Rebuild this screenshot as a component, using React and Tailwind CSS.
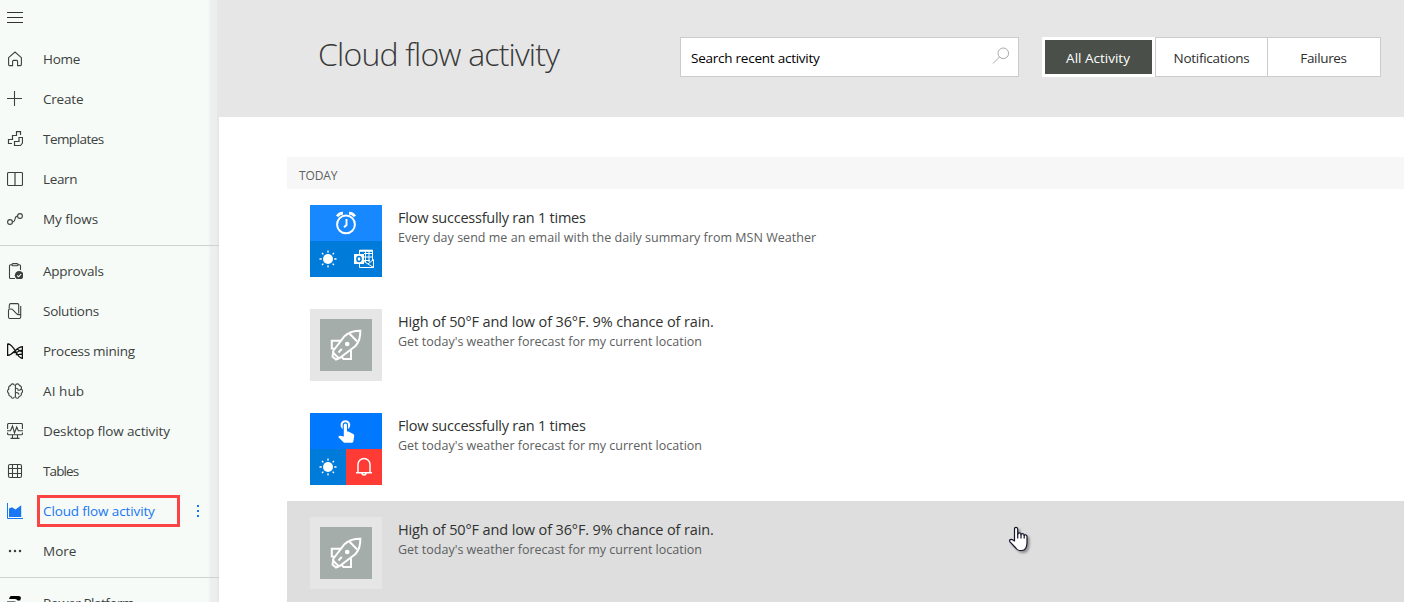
const icons = {
  home: <path d="M1.6 6.7 8 1l6.4 5.7V13.6a1 1 0 0 1-1 1H10.600V10.400a1 1 0 0 0-1-1H6.600a1 1 0 0 0-1 1V14.600H2.600a1 1 0 0 1-1-1Z" />,
  create: <path d="M0 7.500H15M7.500 0V15" />,
  templates: <path d="M13.500 4V.6H9.500V4.500H5.500V8.500H1.500V12.500H5M12 6.500h3.500V12l-2 2.500H7.500V10.500H12Z" strokeWidth="1.200" />,
  learn: <><rect x=".5" y="1.500" width="15" height="13" rx="1" strokeWidth="1.150" /><path d="M7.500 2V14M8.500 2V14" strokeWidth=".6" /></>,
  flows: <><circle cx="3" cy="11" r="2.400" /><circle cx="13" cy="5" r="2.400" /><path d="M5.400 11C9.500 11 6.500 5 10.600 5" /></>,
  approvals: <><path d="M5 1.800H3.500a1 1 0 0 0-1 1V14.500a1 1 0 0 0 1 1H8M11 1.800h1.500a1 1 0 0 1 1 1V7" /><rect x="5" y=".6" width="6" height="2.200" rx="1" /><circle cx="12.200" cy="12.300" r="4.400" fill="currentColor" stroke="none" /><path d="m10.200 12.500 1.400 1.300 2.500-2.700" stroke="#f6fbf8" /></>,
  solutions: <path d="M2.100 5.500 2.400 1.800q.1-1.200 1.200-1.200H10.500q1.200 0 1.200 1.200V10.500M13.700 3V14q0 1.500-1.500 1.500H3q-1.500 0-1.500-1.500V7.500q0-1.500 1.500-1.500h1q1.100 0 1.900 1l3.600 3.600q.9 1 2 1h2.200" />,
  mining: <path d="M.6.700V12.400C7.500 12 7.500 4.500 15.400 3.600V15.400C9 15 8.500 2 .6.700M7 9.500C10 10.500 12 7.200 15.400 7.200M8.800 11.500C11 12 13 11 15.400 11M10 6 15.400 9.200" stroke="#111" strokeWidth="1.300" />,
  ai: <><path d="M7.400 2.500C7 .3 4.200.2 3.600 2.600 1.600 3 1.300 4.800 1.900 6 0 7 .2 9.600 1.800 10.300c-.4 1.800.7 3 2.100 3 .6 2.600 3.200 2.600 3.500.4" /><path d="M8.400 2.500C8.800.3 11.900.2 12.500 2.600c2 .4 2.200 2.200 1.700 3.400 1.800 1 1.700 3.600.1 4.300.4 1.800-.7 3-2.100 3-.6 2.600-3.200 2.600-3.800.4ZM9 5.200c1.300 0 2 .7 2.200 1.500M14 6.200c-1 1.200-2.500 1.200-3.500.8M9 9.500c1.500 0 2.700.8 3 2" /></>,
  desktop: <><path d="M.6 6V1.500a1 1 0 0 1 1-1H14.400a1 1 0 0 1 1 1V6M.6 9.500v1.200a1 1 0 0 0 1 1H14.400a1 1 0 0 0 1-1V9.500M5.500 12v3M10.500 12v3M3.500 15.400h9" /><path d="M0 7.800H3.500L5.500 3 7.500 10 9.700 4l1.600 3.800H16" strokeWidth="1.100" /></>,
  tables: <><rect x="1.500" y="1.500" width="13" height="13" rx="1.500" /><path d="M1.500 5.500h13M1.500 10.500h13M5.500 1.500v13M10.500 1.500v13" /></>,
  chart: <><path d="M.5 0V15.500H16" /><path d="M2 14V5.500L5 4.200 8.500 6.500 14.200 2.200V14Z" fill="currentColor" stroke="none" /></>,
  more: <g fill="currentColor" stroke="none"><circle cx="3" cy="8" r="1.250" /><circle cx="8" cy="8" r="1.250" /><circle cx="13" cy="8" r="1.250" /></g>,
  platform: <path d="M4.500 1H11.500Q14.500 1 13.800 3.500L13.200 5.500H10.500Q10 4 8 4H2L2.800 2Q3.200 1 4.500 1ZM0 6.500H8.500L8 8.500H.5ZM1 10H12L10 13H2Z" fill="black" stroke="none" />,
};

function NavItem({ icon, label, spacing }) {
  return (
    <a className="flex h-10 shrink-0 items-center gap-5 pl-[7px] text-[#3c413d]">
      <svg className="size-4 shrink-0" viewBox="0 0 16 16" fill="none" stroke="currentColor" strokeWidth="1.100">{icons[icon]}</svg>
      <span className={`whitespace-nowrap text-[13.5px] ${spacing}`}>{label}</span>
    </a>
  );
}

function Sun() {
  return (
    <svg className="size-[18px]" viewBox="-9 -9 18 18" fill="none" stroke="white" strokeWidth="1.300">
      <circle r="5" fill="white" stroke="none" />
      <path d="M0-8.500V-6.300M0 6.300V8.500M-8.500 0H-6.300M6.300 0H8.500M-6-6-4.600-4.600M4.600 4.600 6 6M-6 6-4.600 4.600M4.600-4.600 6-6" />
    </svg>
  );
}

function AlarmTile() {
  return (
    <div className="grid size-[72px] shrink-0 grid-rows-2 bg-[#007bd9]">
      <div className="flex items-center justify-center bg-[#1788ff]">
        <svg className="size-6" viewBox="0 0 24 24" fill="none" stroke="white" strokeWidth="2">
          <circle cx="12" cy="13.400" r="8.900" />
          <path d="M12.500 8V14L10 16.200" strokeWidth="1.900" />
          <path d="M3.200 5.400Q5 2.400 9 2.200M15 2.200Q19 2.400 20.800 5.400" strokeWidth="2.800" />
        </svg>
      </div>
      <div className="grid grid-cols-2 place-items-center">
        <Sun />
        <svg className="size-5" viewBox="0 0 20 20" fill="none" stroke="white" strokeWidth="1">
          <path d="M5.500 5V1.200H18.500V12M5.500 15V18.500H19.500V10.500L14 15 10 12.500M14 15 19.500 18.500M10 4.500H18.500M10 8H18.500M10 11.500H16M11.500 2V13M15 2V13" />
          <path d="M5.500 1H18.500V2.800H5.500Z" fill="white" stroke="none" />
          <rect x="0" y="5" width="10" height="10" fill="white" stroke="none" />
          <ellipse cx="5" cy="10" rx="2.100" ry="2.500" stroke="#007bd9" strokeWidth="1.500" />
        </svg>
      </div>
    </div>
  );
}

function TouchTile() {
  return (
    <div className="grid size-[72px] shrink-0 grid-cols-2 grid-rows-2">
      <div className="col-span-2 flex items-center justify-center bg-[#0078ff]">
        <svg className="size-6" viewBox="0 0 24 24" fill="white">
          <path d="M9 11.240V7.500a2.500 2.500 0 0 1 5 0v3.740c1.210-.81 2-2.180 2-3.740a4.500 4.500 0 0 0-9 0c0 1.560.79 2.930 2 3.740Zm9.840 4.630-4.540-2.260a1.200 1.200 0 0 0-.54-.11H13v-6a1.500 1.500 0 0 0-3 0v10.740l-3.430-.72a1.050 1.050 0 0 0-1.030.31l-.79.800 4.940 4.940c.27.270.65.440 1.060.440h6.790c.75 0 1.330-.55 1.440-1.280l.75-5.270a1.500 1.500 0 0 0-.89-1.590Z" transform="translate(-.9 -2) scale(1.070)" />
        </svg>
      </div>
      <div className="flex items-center justify-center bg-[#007bd9]"><Sun /></div>
      <div className="flex items-center justify-center bg-[#ff3b36]">
        <svg className="size-5" viewBox="0 0 20 20" fill="none" stroke="white" strokeWidth="1.500">
          <path d="M2 15.800H18M4 15.500V7.500a6 6 0 0 1 12 0V15.500M8 16a2 2 0 0 0 4 0" />
        </svg>
      </div>
    </div>
  );
}

function RocketTile() {
  return (
    <div className="size-[72px] shrink-0 bg-[#e6e6e6] p-[10px]">
      <div className="flex size-[52px] items-center justify-center bg-[#a5adab]">
        <svg className="size-8" viewBox="0 0 32 32" fill="none" stroke="white" strokeWidth="2">
          <path d="M30.300 1.700C24 1.700 18.500 3.200 14.500 7.200L3.500 21.500Q2.500 23 3.700 24.200L7.800 28.200Q9.200 29.500 10.700 28.300L25.500 17C29.500 12.500 30.500 8 30.300 1.700Z" />
          <path d="M19.300 4.500 27.200 12.500M11 11.800H1.800V19.500L4.800 20M21 21V30H13.500L11.500 28M3.200 23.500 2.500 27.500 6 30.500 9.500 29M8.500 23.500 11.800 19.800" />
          <circle cx="17.200" cy="15" r="2.300" fill="white" stroke="none" />
        </svg>
      </div>
    </div>
  );
}

function Row({ tile, title, titleSpacing, text, textSpacing, bg = "" }) {
  return (
    <div className={`flex h-[104px] shrink-0 gap-4 pl-[23px] pt-4 ${bg}`}>
      {tile}
      <div className="whitespace-nowrap pt-[3px]">
        <div className={`text-[14.5px] leading-5 text-[#2f3230] ${titleSpacing}`}>{title}</div>
        <div className={`text-[12.500px] leading-5 text-[#5c605e] ${textSpacing}`}>{text}</div>
      </div>
    </div>
  );
}

export default function App() {
  const high = "High of 50°F and low of 36°F. 9% chance of rain.";
  const forecast = "Get today's weather forecast for my current location";
  return (
    <div className="relative flex h-[602px] w-[1404px] overflow-hidden bg-white font-['Open_Sans','Noto_Sans',sans-serif]">
      <nav className="flex w-[219px] shrink-0 flex-col overflow-hidden bg-[linear-gradient(to_right,#f6fbf8_207px,#f6f7f5_208px,#f5f7f5_210px,#eef0ef_210px,#eceeed_217px,#e5e8e7_217px)]">
        <div className="flex h-[39px] shrink-0 flex-col gap-1 pl-[7px] pt-3">
          <div className="h-px w-4 bg-[#333]" />
          <div className="h-px w-4 bg-[#333]" />
          <div className="h-px w-4 bg-[#333]" />
        </div>
        <NavItem icon="home" label="Home" spacing="tracking-[-0.25px]" />
        <NavItem icon="create" label="Create" spacing="tracking-[-0.2px]" />
        <NavItem icon="templates" label="Templates" spacing="tracking-[-0.55px]" />
        <NavItem icon="learn" label="Learn" spacing="tracking-[-0.35px]" />
        <NavItem icon="flows" label="My flows" spacing="tracking-[-0.03px]" />
        <div className="mb-[5px] mt-[6px] h-px shrink-0 bg-[#cdd1cf]" />
        <NavItem icon="approvals" label="Approvals" spacing="tracking-[-0.24px]" />
        <NavItem icon="solutions" label="Solutions" spacing="tracking-[-0.27px]" />
        <NavItem icon="mining" label="Process mining" spacing="tracking-[-0.26px]" />
        <NavItem icon="ai" label="AI hub" spacing="tracking-[0.1px]" />
        <NavItem icon="desktop" label="Desktop flow activity" spacing="tracking-[-0.13px]" />
        <NavItem icon="tables" label="Tables" spacing="tracking-[-0.9px]" />
        <div className="flex h-10 shrink-0 items-center pl-[7px] text-[#1877f2]">
          <svg className="size-4 shrink-0" viewBox="0 0 16 16" fill="none" stroke="currentColor">{icons.chart}</svg>
          <div className="ml-[14px] flex h-8 w-[143px] items-center whitespace-nowrap border-[3px] border-[#fb4444] pl-[3px] text-[13.5px] tracking-[-0.12px]">Cloud flow activity</div>
          <div className="ml-[17px] flex flex-col gap-[3px]">
            <div className="size-[2px] bg-current" />
            <div className="size-[2px] bg-current" />
            <div className="size-[2px] bg-current" />
          </div>
        </div>
        <NavItem icon="more" label="More" spacing="tracking-[0px]" />
        <div className="mb-[5px] mt-[6px] h-px shrink-0 bg-[#cdd1cf]" />
        <NavItem icon="platform" label="Power Platform" spacing="tracking-[-0.48px]" />
      </nav>

      <main className="flex min-w-0 flex-1 flex-col">
        <header className="flex h-[117px] shrink-0 items-start bg-[#e6e6e6] pl-[99px] pt-[37px]">
          <h1 className="-mt-[5px] w-[362px] whitespace-nowrap text-[32px] font-light leading-[44px] tracking-[-0.82px] text-[#383838]">Cloud flow activity</h1>
          <div className="flex h-10 w-[339px] items-center justify-between border border-[#ccc] bg-white pl-[10px] pr-2">
            <span className="pt-[2px] text-[13.5px] tracking-[-0.24px] text-black">Search recent activity</span>
            <svg className="-mt-1 size-[18px]" viewBox="0 0 18 18" fill="none" stroke="#a8a8a8">
              <circle cx="11.300" cy="7.300" r="5.300" />
              <path d="M7.500 11 1 17.500" />
            </svg>
          </div>
          <div className="ml-[23px] flex h-10 text-[13.5px] text-[#2e2e2e]">
            <div className="flex w-[113px] items-center justify-center border-[3px] border-white bg-[#4a4f49] pr-px pt-[2px] tracking-[0px] text-white">All Activity</div>
            <div className="flex w-[113px] items-center justify-center border border-[#ccc] bg-white pt-[2px] tracking-[-0.27px]">Notifications</div>
            <div className="-ml-px flex w-[114px] items-center justify-center border border-[#ccc] bg-white pr-px pt-[2px] tracking-[-0.35px]">Failures</div>
          </div>
        </header>
        <section className="flex flex-col overflow-hidden pl-[68px] pt-10">
          <div className="flex h-8 shrink-0 items-center bg-[#f7f7f7] pl-3 pt-[5px] text-[12px] tracking-[-0.15px] text-[#5c605e]">TODAY</div>
          <Row tile={<AlarmTile />} title="Flow successfully ran 1 times" titleSpacing="tracking-[-0.24px]" text="Every day send me an email with the daily summary from MSN Weather" textSpacing="tracking-[0.02px]" />
          <Row tile={<RocketTile />} title={high} titleSpacing="tracking-[-0.13px]" text={forecast} textSpacing="tracking-[0px]" />
          <Row tile={<TouchTile />} title="Flow successfully ran 1 times" titleSpacing="tracking-[-0.24px]" text={forecast} textSpacing="tracking-[0px]" />
          <Row tile={<RocketTile />} title={high} titleSpacing="tracking-[-0.13px]" text={forecast} textSpacing="tracking-[0px]" bg="bg-[#dedede]" />
        </section>
      </main>

      <svg className="absolute left-[1008px] top-[526px] h-7 w-6 drop-shadow-[2px_2px_1px_rgba(0,0,0,0.35)]" viewBox="0 0 24 28" fill="white" stroke="#15152a" strokeWidth="1.200" strokeLinejoin="round">
        <path d="M6.500 15V3Q6.500 1.300 8 1.300T9.700 3V8.500Q9.700 6.800 11.400 6.800T13 8.800Q13 7.600 14.600 7.600T16.200 9.500Q16.400 8.600 17.700 8.800T19 10.500V17Q19 20 17.500 22.500 16.500 24.500 13.500 24.500H11.500Q9.500 24.500 7.800 22L2 15.800Q1 14.300 2.300 13.600T5 14Z" />
        <path d="M9.700 8V12.500M13 8.500V12.500M16.200 9V12.500" />
      </svg>
    </div>
  );
}
